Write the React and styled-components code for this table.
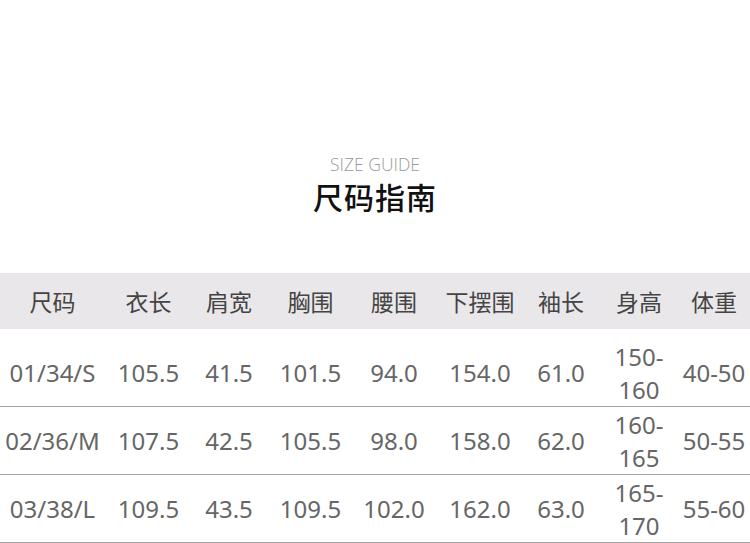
import styled, { createGlobalStyle } from "styled-components";

const GlobalStyle = createGlobalStyle`
  html, body {
    margin: 0;
    padding: 0;
    background: #fff;
  }
`;

const Page = styled.div`
  width: 750px;
  height: 543px;
  overflow: hidden;
  box-sizing: border-box;
  padding-top: 152px;
  background: #fff;
  font-family: "Noto Sans", "Noto Sans CJK SC", sans-serif;
`;

const Heading = styled.div`
  display: flex;
  flex-direction: column;
  align-items: center;
`;

const Eyebrow = styled.div`
  font-family: "Open Sans", "Noto Sans", sans-serif;
  font-weight: 300;
  font-size: 17.5px;
  line-height: 24px;
  color: #9a9a9a;
`;

const Title = styled.h1`
  margin: 0;
  font-family: "Noto Sans CJK SC", sans-serif;
  font-weight: 500;
  font-size: 30px;
  line-height: 40px;
  color: #111;
  letter-spacing: 1px;
`;

const Table = styled.div`
  margin-top: 57px;
  display: flex;
  flex-direction: column;
`;

const Row = styled.div`
  display: grid;
  grid-template-columns: 105px 87px 74px 89px 78px 94px 68px 88px 62px;
  height: ${(p) => (p.$header ? "56px" : "67px")};
  margin-bottom: ${(p) => (p.$header ? "10px" : "0")};
  background: ${(p) => (p.$header ? "#e9e7ea" : "#fff")};
  border-bottom: ${(p) => (p.$header ? "none" : "1px solid #a3a3a3")};
`;

const Cell = styled.div`
  display: flex;
  align-items: center;
  justify-content: center;
  white-space: nowrap;
  font-size: ${(p) => (p.$header ? "23px" : "24px")};
  color: ${(p) => (p.$header ? "#444" : "#666")};
  font-family: ${(p) =>
    p.$header
      ? '"Noto Sans CJK SC", sans-serif'
      : '"Noto Sans", "Liberation Sans", sans-serif'};
`;

const Stack = styled.div`
  display: flex;
  flex-direction: column;
  align-items: center;
  line-height: 33px;
`;

const headers = ["尺码", "衣长", "肩宽", "胸围", "腰围", "下摆围", "袖长", "身高", "体重"];

const rows = [
  ["01/34/S", "105.5", "41.5", "101.5", "94.0", "154.0", "61.0", "150-160", "40-50"],
  ["02/36/M", "107.5", "42.5", "105.5", "98.0", "158.0", "62.0", "160-165", "50-55"],
  ["03/38/L", "109.5", "43.5", "109.5", "102.0", "162.0", "63.0", "165-170", "55-60"],
];

function HeightRange({ value }) {
  const [from, to] = value.split("-");
  return (
    <Stack>
      <span>{from}-</span>
      <span>{to}</span>
    </Stack>
  );
}

export default function App() {
  return (
    <Page>
      <GlobalStyle />
      <Heading>
        <Eyebrow>SIZE GUIDE</Eyebrow>
        <Title>尺码指南</Title>
      </Heading>
      <Table>
        <Row $header>
          {headers.map((h) => (
            <Cell $header key={h}>
              {h}
            </Cell>
          ))}
        </Row>
        {rows.map((r) => (
          <Row key={r[0]}>
            {r.map((v, i) => (
              <Cell key={i}>{i === 7 ? <HeightRange value={v} /> : v}</Cell>
            ))}
          </Row>
        ))}
      </Table>
    </Page>
  );
}
